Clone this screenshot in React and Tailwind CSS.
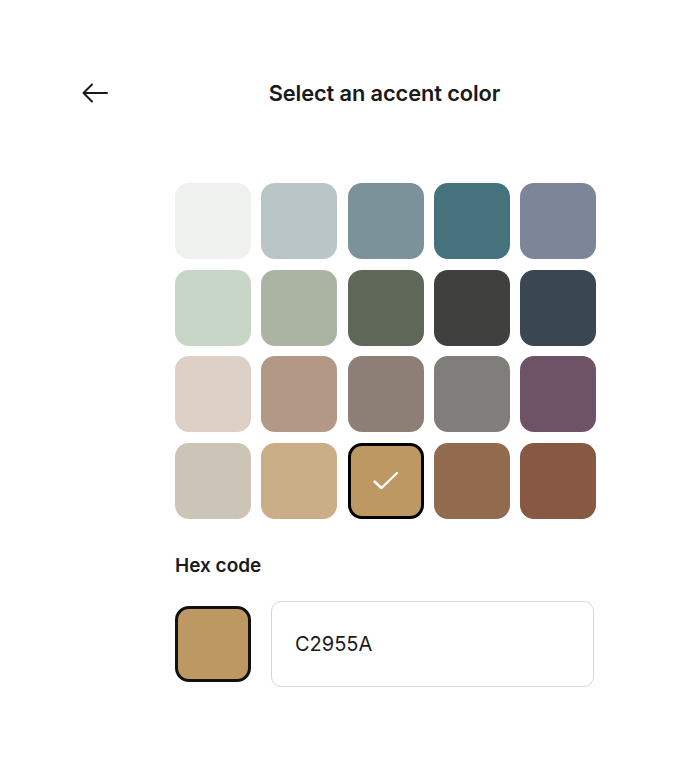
import React, { useState } from 'react';

const colors = [
    '#EFF1EE', '#BAC5C7', '#7B929A', '#46727E', '#7D8699',
    '#C8D6C8', '#ABB3A2', '#5F6858', '#40403E', '#3A4750',
    '#DDD0C7', '#B29885', '#8D7F75', '#7F7E7A', '#6D5365',
    '#CCC4B7', '#C9AE88', '#BD9862', '#926A4D', '#875843',
];

export default function App() {
    const [selected, setSelected] = useState(17);
    const [hex, setHex] = useState('C2955A');

    return (
        <div className="min-h-screen bg-white text-[#1a1a1a]" style={{ fontFamily: 'Inter, "Noto Sans", sans-serif' }}>
            <div className="flex items-center pt-[79px]">
                <div className="w-[175px] pl-[82px]">
                    <button className="flex items-center">
                        <svg width="26" height="20" viewBox="0 0 26 20" fill="none" stroke="#1a1a1a" strokeWidth="2" strokeLinecap="round" strokeLinejoin="round">
                            <path d="M25 10H1.5M10 1.5L1.5 10L10 18.5" />
                        </svg>
                    </button>
                </div>
                <h1 className="w-[419px] text-center text-[21.8px] font-semibold leading-[28px] tracking-[-0.1px]">Select an accent color</h1>
            </div>

            <div className="ml-[175px] mt-[76px] w-[424px]">
                <div className="grid grid-cols-[repeat(5,76px)] gap-x-[10.3px] gap-y-[10.5px]">
                    {colors.map((c, i) => (
                        <button
                            key={c}
                            onClick={() => setSelected(i)}
                            className={`flex h-[76px] w-[76px] items-center justify-center rounded-[14px] ${selected === i ? 'border-[3px] border-black' : ''}`}
                            style={{ backgroundColor: c }}
                        >
                            {selected === i && (
                                <svg width="26" height="20" viewBox="0 0 26 20" fill="none" stroke="white" strokeWidth="2.4" strokeLinecap="round" strokeLinejoin="round">
                                    <path d="M1.5 10.5L8.5 17L24 2" />
                                </svg>
                            )}
                        </button>
                    ))}
                </div>

                <h2 className="mt-[33px] text-[19px] font-semibold leading-[28px]">Hex code</h2>

                <div className="mt-[21px] flex items-center gap-[20px]">
                    <div className="h-[76px] w-[76px] shrink-0 rounded-[14px] border-[3px] border-[#111]" style={{ backgroundColor: colors[selected] }} />
                    <input
                        value={hex}
                        onChange={(e) => setHex(e.target.value)}
                        className="h-[86px] w-[323px] rounded-[10px] border-[1.5px] border-[#d6d6d6] px-[23px] text-[20px] text-[#1a1a1a] outline-none"
                    />
                </div>
            </div>
        </div>
    );
}
